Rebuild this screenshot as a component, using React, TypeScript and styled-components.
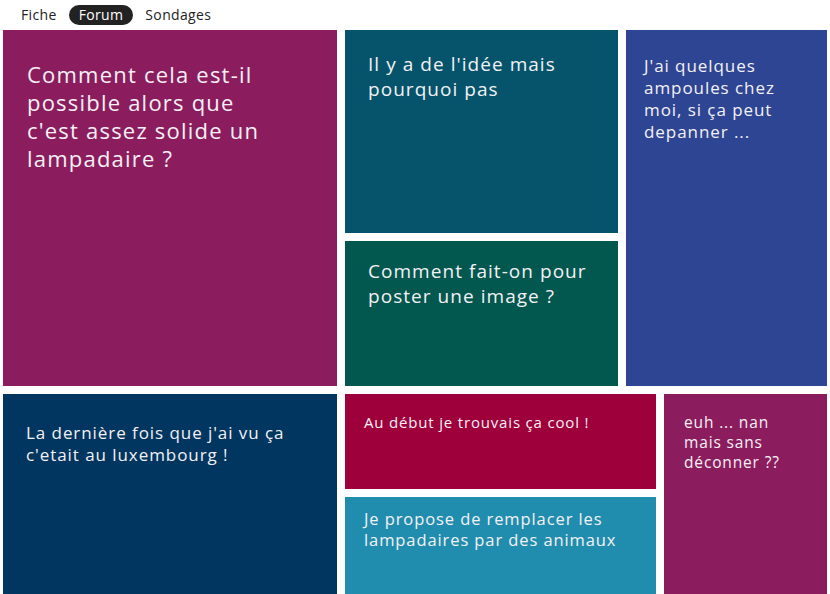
import React from "react";
import styled, { createGlobalStyle } from "styled-components";

const Global = createGlobalStyle`
  html, body { margin: 0; padding: 0; background: #ffffff; }
  body { font-family: "Open Sans", "Noto Sans", sans-serif; overflow: hidden; }
`;

const Page = styled.div`
  width: 830px;
  height: 594px;
  overflow: hidden;
  display: flex;
  flex-direction: column;
`;

const Nav = styled.nav`
  flex: 0 0 30px;
  height: 30px;
  display: flex;
  align-items: center;
  gap: 2px;
  padding-left: 11px;
  box-sizing: border-box;
`;

const NavItem = styled.a<{ $active?: boolean }>`
  font-size: 14px;
  line-height: 20px;
  height: 20px;
  padding: 0 10px;
  border-radius: 10px;
  color: ${(p) => (p.$active ? "#ffffff" : "#222222")};
  background: ${(p) => (p.$active ? "#222222" : "transparent")};
  text-decoration: none;
  cursor: pointer;
  letter-spacing: 0.35px;
`;

const Board = styled.div`
  flex: 0 0 auto;
  display: flex;
  flex-direction: column;
  gap: 8px;
  padding: 0 3px;
`;

const Row = styled.div<{ $cols: string }>`
  flex: 0 0 356px;
  display: grid;
  grid-template-columns: ${(p) => p.$cols};
  column-gap: 8px;
  height: 356px;
`;

const Stack = styled.div<{ $rows: string }>`
  display: grid;
  grid-template-rows: ${(p) => p.$rows};
  row-gap: 8px;
`;

const Tile = styled.div<{
  $bg: string;
  $size: number;
  $lh: number;
  $pad: string;
}>`
  background: ${(p) => p.$bg};
  color: #f4f1f4;
  font-size: ${(p) => p.$size}px;
  line-height: ${(p) => p.$lh}px;
  padding: ${(p) => p.$pad};
  box-sizing: border-box;
  overflow: hidden;
  letter-spacing: 0.055em;
  white-space: nowrap;
`;

const lines = (t: string[]) =>
  t.map((l, i) => (
    <React.Fragment key={i}>
      {l}
      {i < t.length - 1 && <br />}
    </React.Fragment>
  ));

export default function App() {
  return (
    <Page>
      <Global />
      <Nav>
        <NavItem>Fiche</NavItem>
        <NavItem $active>Forum</NavItem>
        <NavItem>Sondages</NavItem>
      </Nav>
      <Board>
        <Row $cols="334px 273px 201px">
          <Tile $bg="#8b1d5f" $size={22} $lh={28} $pad="30px 12px 0 24px">
            {lines([
              "Comment cela est-il",
              "possible alors que",
              "c'est assez solide un",
              "lampadaire ?",
            ])}
          </Tile>
          <Stack $rows="203px 145px">
            <Tile $bg="#05546b" $size={19} $lh={25} $pad="22px 10px 0 23px">
              {lines(["Il y a de l'idée mais", "pourquoi pas"])}
            </Tile>
            <Tile $bg="#02574f" $size={19} $lh={25} $pad="18px 10px 0 23px">
              {lines(["Comment fait-on pour", "poster une image ?"])}
            </Tile>
          </Stack>
          <Tile $bg="#2e4593" $size={17} $lh={22} $pad="25px 8px 0 18px">
            {lines(["J'ai quelques", "ampoules chez", "moi, si ça peut", "depanner ..."])}
          </Tile>
        </Row>
        <Row $cols="334px 311px 163px">
          <Tile $bg="#003660" $size={17} $lh={22} $pad="28px 8px 0 23px">
            {lines(["La dernière fois que j'ai vu ça", "c'etait au luxembourg !"])}
          </Tile>
          <Stack $rows="95px 253px">
            <Tile $bg="#9e003c" $size={15} $lh={20} $pad="18px 8px 0 19px">
              Au début je trouvais ça cool !
            </Tile>
            <Tile $bg="#218dae" $size={16.5} $lh={21} $pad="11px 8px 0 19px">
              {lines(["Je propose de remplacer les", "lampadaires par des animaux"])}
            </Tile>
          </Stack>
          <Tile $bg="#8b1d5f" $size={15.5} $lh={20} $pad="18px 8px 0 20px">
            {lines(["euh ... nan", "mais sans", "déconner ??"])}
          </Tile>
        </Row>
      </Board>
    </Page>
  );
}
